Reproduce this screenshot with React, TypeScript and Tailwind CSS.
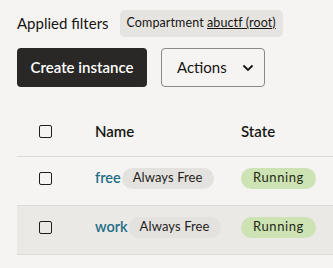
import React from "react";

function Checkbox() {
  return <div className="w-[13px] h-[13px] border-[1.5px] border-[#1f1e1d] rounded-[2px] bg-transparent" />;
}

function Row({ name, shaded }: { name: string; shaded?: boolean }) {
  return (
    <div
      className={
        "grid grid-cols-[78px_146px_1fr] h-[49px] pb-[6px] items-center border-b border-[#dcdad7] " +
        (shaded ? "bg-[#ebe9e6]" : "")
      }
    >
      <div className="pl-[22px] flex items-center">
        <Checkbox />
      </div>
      <div className="flex items-center">
        <span className="text-[14.5px] font-semibold text-[#1f6d87]">{name}</span>
        <span className="ml-[1px] h-[21px] flex items-center px-[11px] rounded-full bg-[#e4e2df] text-[13px] tracking-[0.1px] text-[#1f1e1d]">
          Always Free
        </span>
      </div>
      <div className="flex items-center">
        <span className="h-[21px] flex items-center px-[12px] rounded-full bg-[#cde3b4] text-[13px] tracking-[0.6px] text-[#1f2a15]">
          Running
        </span>
      </div>
    </div>
  );
}

export default function App() {
  return (
    <div
      className="w-[333px] h-[268px] overflow-hidden bg-[#f5f4f2] text-[#161513]"
      style={{ fontFamily: "Lato, 'Noto Sans', sans-serif" }}
    >
      <div className="pl-[17px] pt-[10px]">
        <div className="flex items-center gap-[11px]">
          <span className="text-[15px] text-[#161513]">Applied filters</span>
          <span className="h-[27px] flex items-center px-[7px] rounded-[5px] bg-[#e6e4e1] text-[12.5px] tracking-[0.1px] text-[#161513]">
            Compartment&nbsp;<span className="underline">abuctf (root)</span>
          </span>
        </div>
        <div className="flex items-center gap-[14px] mt-[11px]">
          <button className="h-[39px] w-[130px] rounded-[4px] bg-[#2a2826] text-white text-[15px] font-semibold">
            Create instance
          </button>
          <button className="h-[39px] w-[104px] rounded-[4px] border border-[#8b8784] text-[15px] text-[#161513] flex items-center pl-[15px] gap-[15px]">
            Actions
            <svg width="12" height="8" viewBox="0 0 12 8" fill="none">
              <path d="M1.5 1.5 L6 6 L10.5 1.5" stroke="#161513" strokeWidth="1.8" />
            </svg>
          </button>
        </div>
        <div className="mt-[19px]">
          <div className="grid grid-cols-[78px_146px_1fr] h-[51px] items-center border-b border-[#dcdad7]">
            <div className="pl-[22px] flex items-center">
              <Checkbox />
            </div>
            <span className="text-[15px] font-semibold">Name</span>
            <span className="text-[15px] font-semibold">State</span>
          </div>
          <Row name="free" />
          <Row name="work" shaded />
        </div>
      </div>
    </div>
  );
}
